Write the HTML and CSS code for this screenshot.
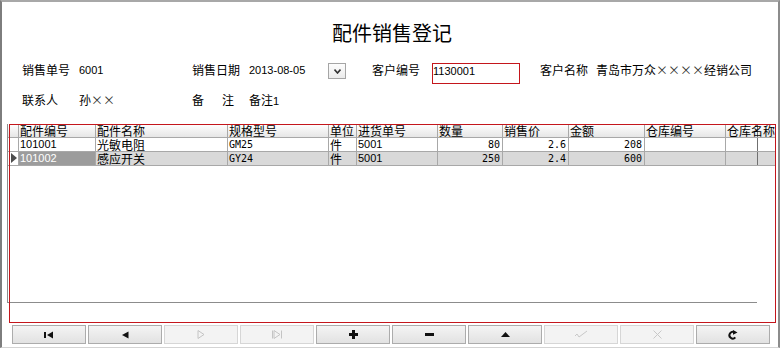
FILE: index.html
```html
<!DOCTYPE html>
<html lang="zh-CN">
<head>
  <meta charset="utf-8" />
  <title>配件销售登记</title>
  <link rel="stylesheet" href="styles.css">
</head>
<body>
  <div class="window">
    <h1 class="title">配件销售登记</h1>

    <!-- header fields -->
    <div class="fields">
      <div class="row">
        <div class="field"><span class="lbl">销售单号</span><span class="num">6001</span></div>
        <div class="field">
          <span class="lbl">销售日期</span><span class="num date">2013-08-05</span>
          <span class="drop"><svg width="7" height="5" viewBox="0 0 7 5"><polyline points="0.5,0.5 3.5,4 6.5,0.5" fill="none" stroke="#333" stroke-width="1.6"/></svg></span>
        </div>
        <div class="field"><span class="lbl wide">客户编号</span><span class="input">1130001</span></div>
        <div class="field"><span class="lbl narrow">客户名称</span><span>青岛市万众<span class="x">×</span><span class="x">×</span><span class="x">×</span><span class="x">×</span>经销公司</span></div>
      </div>
      <div class="row">
        <div class="field"><span class="lbl">联系人</span><span>孙<span class="x">×</span><span class="x">×</span></span></div>
        <div class="field"><span class="lbl"><span class="gap">备</span>注</span><span>备注<span class="num">1</span></span></div>
      </div>
    </div>

    <!-- data grid -->
    <div class="grid-wrap">
      <div class="grid">
        <div class="grow ghead">
          <div class="cell"></div>
          <div class="cell">配件编号</div>
          <div class="cell">配件名称</div>
          <div class="cell">规格型号</div>
          <div class="cell">单位</div>
          <div class="cell">进货单号</div>
          <div class="cell">数量</div>
          <div class="cell">销售价</div>
          <div class="cell">金额</div>
          <div class="cell">仓库编号</div>
          <div class="cell c11">仓库名称</div>
          <div class="cell last"></div>
        </div>
        <div class="grow">
          <div class="cell ind"></div>
          <div class="cell sans">101001</div>
          <div class="cell">光敏电阻</div>
          <div class="cell mono">GM25</div>
          <div class="cell">件</div>
          <div class="cell sans">5001</div>
          <div class="cell mono r">80</div>
          <div class="cell mono r">2.6</div>
          <div class="cell mono r">208</div>
          <div class="cell"></div>
          <div class="cell c11"></div>
          <div class="cell last"></div>
        </div>
        <div class="grow cur">
          <div class="cell ind"><span class="arrow"></span></div>
          <div class="cell sans focus">101002</div>
          <div class="cell">感应开关</div>
          <div class="cell mono">GY24</div>
          <div class="cell">件</div>
          <div class="cell sans">5001</div>
          <div class="cell mono r">250</div>
          <div class="cell mono r">2.4</div>
          <div class="cell mono r">600</div>
          <div class="cell"></div>
          <div class="cell c11"></div>
          <div class="cell last"></div>
        </div>
      </div>
      <div class="sel-box"></div>
    </div>

    <!-- navigator -->
    <div class="nav">
      <div class="btn"><svg width="10" height="8" viewBox="0 0 10 8"><rect x="0" y="1" width="2" height="6" fill="#111"/><polygon points="3,4 9,0.5 9,7.5" fill="#111"/></svg></div>
      <div class="btn"><svg width="7" height="8" viewBox="0 0 7 8"><polygon points="0,4 6.5,0.5 6.5,7.5" fill="#111"/></svg></div>
      <div class="btn off"><svg width="8" height="9" viewBox="0 0 8 9"><polygon points="1,0.5 7,4.5 1,8.5" fill="none" stroke="#c4c4c4"/></svg></div>
      <div class="btn off"><svg width="11" height="9" viewBox="0 0 11 9"><line x1="0.5" y1="0.5" x2="0.5" y2="8.5" stroke="#c4c4c4"/><polygon points="2,0.5 8,4.5 2,8.5" fill="none" stroke="#c4c4c4"/><line x1="9.5" y1="0.5" x2="9.5" y2="8.5" stroke="#c4c4c4"/></svg></div>
      <div class="btn"><svg width="9" height="9" viewBox="0 0 9 9"><rect x="3" y="0" width="3" height="9" fill="#111"/><rect x="0" y="3" width="9" height="3" fill="#111"/></svg></div>
      <div class="btn"><svg width="9" height="3" viewBox="0 0 9 3"><rect x="0" y="0" width="9" height="3" fill="#111"/></svg></div>
      <div class="btn"><svg width="9" height="5" viewBox="0 0 9 5"><polygon points="0,5 4.5,0 9,5" fill="#111"/></svg></div>
      <div class="btn off"><svg width="14" height="9" viewBox="0 0 14 9"><polyline points="1,6 3,4 5,7 13,1" fill="none" stroke="#c8c8c8"/></svg></div>
      <div class="btn off"><svg width="9" height="9" viewBox="0 0 9 9"><line x1="0.5" y1="0.5" x2="8.5" y2="8.5" stroke="#c8c8c8"/><line x1="8.5" y1="0.5" x2="0.5" y2="8.5" stroke="#c8c8c8"/></svg></div>
      <div class="btn"><svg width="10" height="10" viewBox="0 0 10 10"><path d="M6.8 2.6 A3.3 3.3 0 1 0 7.3 7.4" fill="none" stroke="#111" stroke-width="2"/><polygon points="5,0 9.5,2.6 5,4.8" fill="#111"/></svg></div>
    </div>
  </div>
</body>
</html>
```

FILE: styles.css
```css
*{
    box-sizing:border-box;
}
body{
    margin:0;
    background:#fff;
    color:#000;
    font:12px "Noto Sans CJK SC", "Liberation Sans", sans-serif;
}
.window{
    width:780px;
    height:348px;
    border-style:solid;
    border-width:2px 2px 1px 2px;
    border-color:#a8a8a8 #8c8c8c #d4d4d4 #7d7d7d;
}
.title{
    margin:19px 0 0 4px;
    height:24px;
    line-height:24px;
    font-size:20px;
    font-weight:normal;
    text-align:center;
}

/* form fields */
.fields{
    margin-top:14px;
    padding-left:20px;
}
.row{
    display:grid;
    grid-template-columns:170px 180px 168px auto;
    height:22px;
}
.row + .row{
    margin-top:8px;
}
.field{
    display:flex;
    align-items:flex-start;
    white-space:nowrap;
    line-height:22px;
}
.lbl{
    flex:none;
    width:57px;
}
.lbl.wide{ width:60px; }
.lbl.narrow{ width:56px; }
.gap{ margin-right:18px; }
.num{
    font-family:"Liberation Sans", sans-serif;
    font-size:11px;
}
.date{ width:79px; }
.drop{
    margin-top:4px;
    width:18px;
    height:16px;
    border:1px solid #a5a5a5;
    background:linear-gradient(#fdfdfd, #ebebeb);
    display:flex;
    align-items:center;
    justify-content:center;
}
.input{
    margin-top:4px;
    width:88px;
    height:21px;
    border:1px solid #c4161c;
    padding:1px 0 0 0;
    line-height:14px;
    font:11px "Liberation Sans", sans-serif;
}
.x{
    display:inline-block;
    width:12px;
    text-align:center;
    color:#333;
}

/* grid */
.grid-wrap{
    position:relative;
    margin:13px 0 0 5px;
    height:199px;
}
.grid{
    width:750px;
    height:179px;
    border-left:1px solid #8c8c8c;
    border-bottom:1px solid #8c8c8c;
}
.grow{
    display:grid;
    grid-template-columns:11px 77px 132px 101px 28px 81px 65px 66px 76px 81px 32px 18px;
    width:768px;
    height:14px;
    border-bottom:1px solid #a8a8a8;
}
.cell{
    border-right:1px solid #a8a8a8;
    padding-left:1px;
    line-height:13px;
    white-space:nowrap;
}
.cell.last{ border-right:none; }
.cell.c11{ border-right-color:#707070; }
.ghead{
    background:linear-gradient(#ffffff, #e6e6e6);
}
.sans{
    font:11px "Liberation Sans", sans-serif;
    line-height:13px;
}
.mono{
    font:10px "DejaVu Sans Mono", monospace;
    line-height:13px;
}
.r{
    text-align:right;
    padding-right:2px;
}
.cur{ background:#d9d9d9; }
.cur .ind{ background:#fff; }
.cur .focus{
    background:#9c9c9c;
    color:#fff;
}
.arrow{
    display:block;
    width:0;
    height:0;
    margin:1px 0 0 2px;
    border-left:6px solid #4d4d4d;
    border-top:5px solid transparent;
    border-bottom:5px solid transparent;
}
.sel-box{
    position:absolute;
    left:2px;
    top:0;
    width:767px;
    height:199px;
    border:1px solid #c4161c;
    pointer-events:none;
}

/* navigator buttons */
.nav{
    display:flex;
    gap:2px;
    margin:2px 0 0 10px;
}
.btn{
    width:74px;
    height:19px;
    border:1px solid #acacac;
    background:linear-gradient(#f4f4f4, #e2e2e2);
    display:flex;
    align-items:center;
    justify-content:center;
}
.btn.off{
    border-color:#d6d6d6;
    background:#f3f3f3;
}
```
